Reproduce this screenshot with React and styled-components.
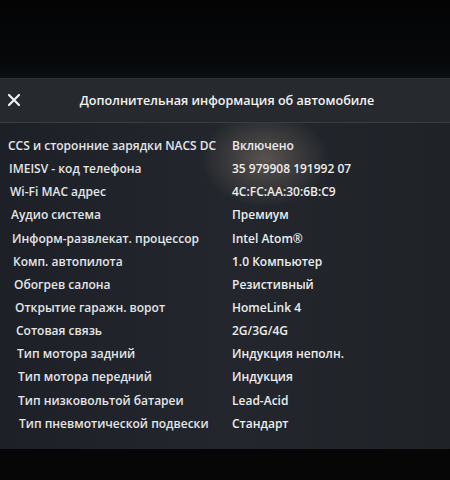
import React from 'react'
import styled, { createGlobalStyle } from 'styled-components'

const GlobalStyle = createGlobalStyle`
  html, body {
    margin: 0;
    padding: 0;
    background: #050506;
  }
  body {
    width: 450px;
    height: 480px;
    overflow: hidden;
    font-family: "Open Sans", "Liberation Sans", sans-serif;
  }
`

const Screen = styled.div`
  width: 450px;
  height: 480px;
  display: flex;
  flex-direction: column;
  background: #050506;
`

const TopBezel = styled.div`
  height: 78px;
  flex-shrink: 0;
  background: linear-gradient(180deg, #040405 0%, #060809 80%, #0b1014 100%);
`

const Panel = styled.section`
  height: 370px;
  flex-shrink: 0;
  display: flex;
  flex-direction: column;
  background:
    radial-gradient(ellipse 80px 60px at 265px 80px, rgba(170, 150, 130, 0.4), transparent 80%),
    linear-gradient(90deg, #1d2127 0%, #23272d 50%, #1f2227 100%);
  border-top: 1px solid #2c3034;
`

const Header = styled.header`
  height: 43px;
  display: flex;
  align-items: center;
  position: relative;
  background: #262a2f;
  border-bottom: 1px solid #3a3e43;
`

const CloseButton = styled.button`
  position: absolute;
  left: 5px;
  top: 12px;
  width: 18px;
  height: 18px;
  padding: 0;
  border: none;
  background: none;
  display: flex;
  align-items: center;
  justify-content: center;
`

const Title = styled.h1`
  flex: 1;
  margin: 0;
  text-align: center;
  padding-left: 4px;
  color: #f2f2f2;
  font-size: 12.6px;
  font-weight: 600;
`

const List = styled.dl`
  margin: 0;
  padding: 11px 0 0 0;
  display: flex;
  flex-direction: column;
`

const Row = styled.div`
  height: 23.15px;
  display: flex;
  align-items: center;
`

const Label = styled.dt`
  width: 232px;
  flex-shrink: 0;
  box-sizing: border-box;
  padding-left: ${({ $shift }) => 8 + $shift}px;
  color: #e4e5e7;
  font-size: 12px;
  font-weight: 600;
  white-space: nowrap;
`

const Value = styled.dd`
  margin: 0;
  color: #eceded;
  font-size: 12px;
  font-weight: 600;
  white-space: nowrap;
`

const BottomBezel = styled.div`
  flex: 1;
  background: #060607;
`

const rows = [
  ['CCS и сторонние зарядки NACS DC', 'Включено'],
  ['IMEISV - код телефона', '35 979908 191992 07'],
  ['Wi-Fi MAC адрес', '4C:FC:AA:30:6B:C9'],
  ['Аудио система', 'Премиум'],
  ['Информ-развлекат. процессор', 'Intel Atom®'],
  ['Комп. автопилота', '1.0 Компьютер'],
  ['Обогрев салона', 'Резистивный'],
  ['Открытие гаражн. ворот', 'HomeLink 4'],
  ['Сотовая связь', '2G/3G/4G'],
  ['Тип мотора задний', 'Индукция неполн.'],
  ['Тип мотора передний', 'Индукция'],
  ['Тип низковольтой батареи', 'Lead-Acid'],
  ['Тип пневмотической подвески', 'Стандарт'],
]

const CloseIcon = () => (
  <svg width="14" height="14" viewBox="0 0 14 14">
    <path d="M2 2 L12 12 M12 2 L2 12" stroke="#f0f0f0" strokeWidth="2.2" strokeLinecap="round" />
  </svg>
)

export default function App() {
  return (
    <Screen>
      <GlobalStyle />
      <TopBezel />
      <Panel>
        <Header>
          <CloseButton aria-label="Закрыть">
            <CloseIcon />
          </CloseButton>
          <Title>Дополнительная информация об автомобиле</Title>
        </Header>
        <List>
          {rows.map(([label, value], i) => (
            <Row key={label}>
              <Label $shift={Math.round(i * 0.95)}>{label}</Label>
              <Value>{value}</Value>
            </Row>
          ))}
        </List>
      </Panel>
      <BottomBezel />
    </Screen>
  )
}
